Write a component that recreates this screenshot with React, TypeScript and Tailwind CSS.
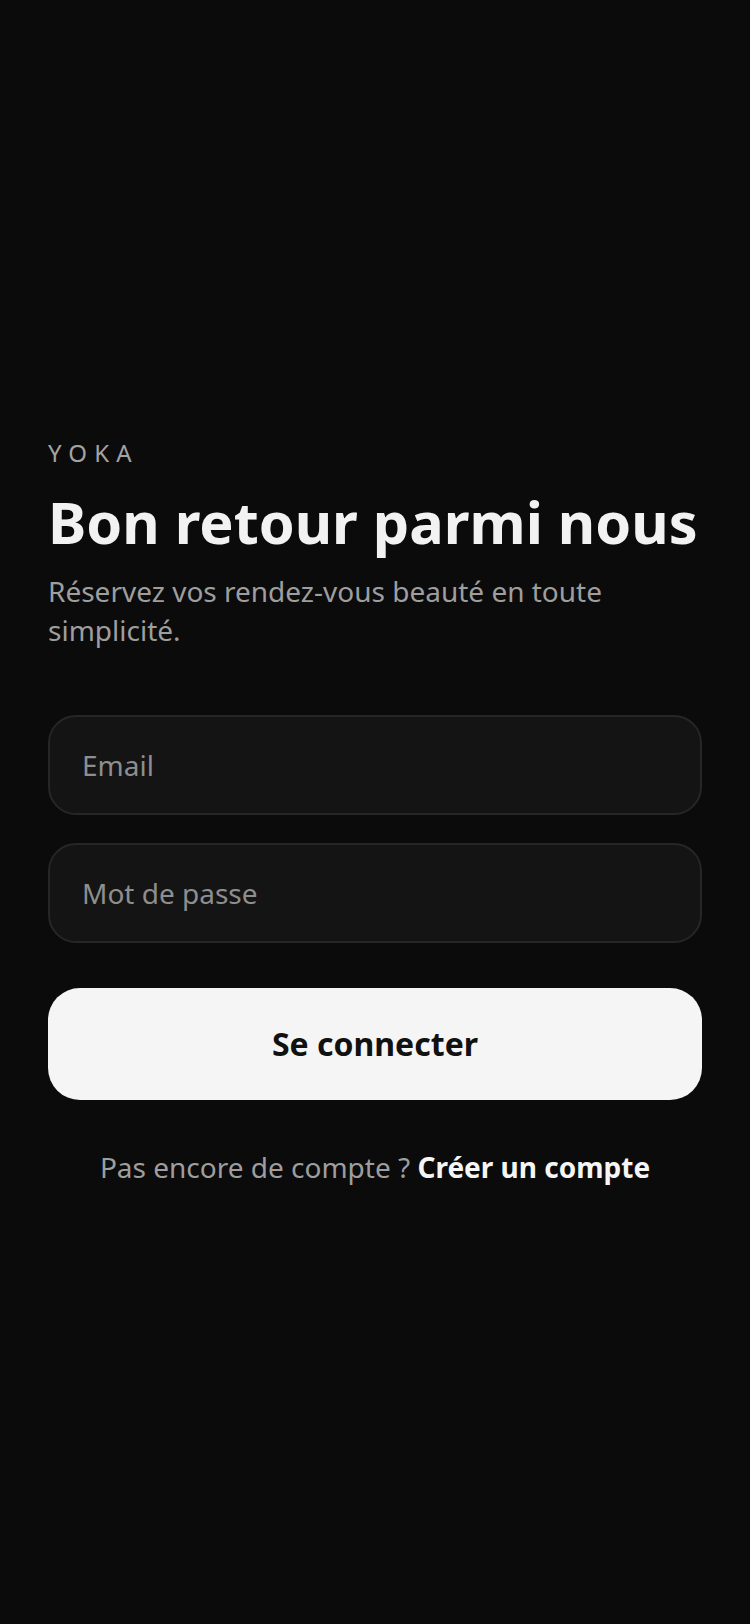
import React from "react";

function Field({ placeholder, type }: { placeholder: string; type: string }) {
  return (
    <input
      type={type}
      placeholder={placeholder}
      className="h-[100px] w-full rounded-[28px] border-2 border-[#262626] bg-[#141414] px-[32px] text-[28px] text-[#f2f2f2] outline-none placeholder:text-[#8e8e8e]"
    />
  );
}

export default function App() {
  return (
    <div className="flex min-h-screen flex-col justify-center bg-[#0b0b0b] px-12 pb-[3px] font-['Noto_Sans',sans-serif]">
      <p className="text-[24px] leading-[36px] tracking-[0.3em] text-[#a3a3a3]">YOKA</p>
      <h1 className="mt-[17px] whitespace-nowrap text-[57.6px] font-bold leading-[67px] text-[#f2f2f2]">
        Bon retour parmi nous
      </h1>
      <p className="mt-[17px] text-[28px] leading-[39px] text-[#9e9e9e]">
        Réservez vos rendez-vous beauté en toute simplicité.
      </p>

      <div className="mt-[65px] flex flex-col gap-[28px]">
        <Field placeholder="Email" type="email" />
        <Field placeholder="Mot de passe" type="password" />
      </div>

      <button className="mt-[45px] h-[112px] w-full rounded-[32px] bg-[#f5f5f5] text-[32px] font-bold text-[#111111]">
        Se connecter
      </button>

      <p className="mt-[48px] text-center text-[28px] leading-[39px] text-[#9e9e9e]">
        Pas encore de compte ? <span className="font-bold text-[#f5f5f5]">Créer un compte</span>
      </p>
    </div>
  );
}
